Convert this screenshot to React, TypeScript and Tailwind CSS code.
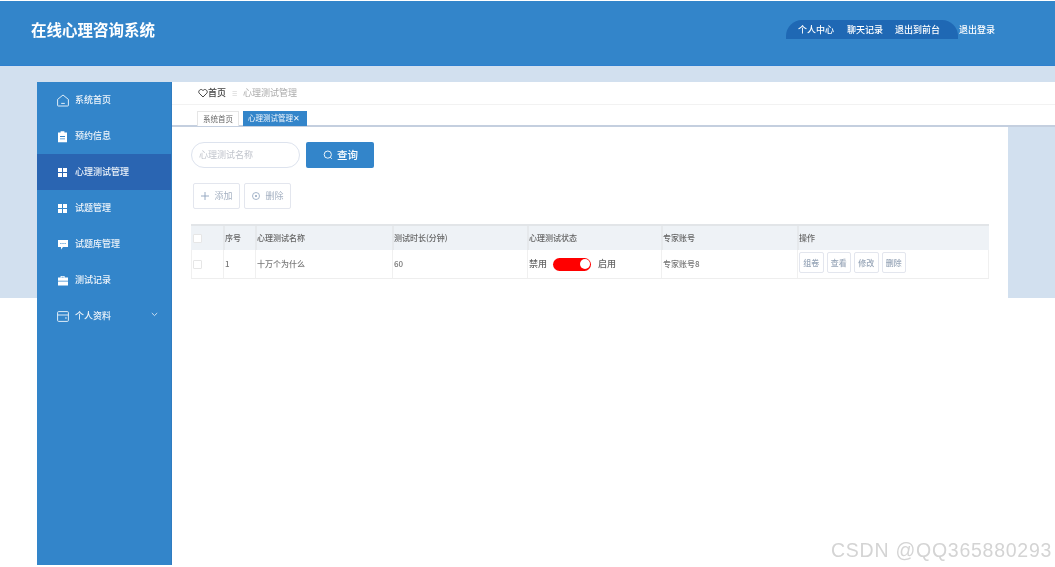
import React from "react";

const font = { fontFamily: '"Noto Sans CJK SC", "Noto Sans", sans-serif' };

const HomeIcon = () => (
  <svg width="13" height="13" viewBox="0 0 13 13" fill="none" stroke="#f2f7fc" strokeWidth="0.9">
    <path d="M.6 5.4 6 1 11.4 5.4V11.4Q11.4 12 10.8 12H1.2Q.6 12 .6 11.4z" strokeLinejoin="round" />
    <path d="M4.2 9.4h3.6" />
  </svg>
);
const ClipIcon = () => (
  <svg width="13" height="13" viewBox="0 0 13 13" fill="white">
    <path d="M1 2.4H3.6V1.2H7.4V2.4H10V12.2H1zM3 6V7H8V6zM3 8.4V9.2H8V8.4z" fillRule="evenodd" />
  </svg>
);
const GridIcon = () => (
  <svg width="13" height="13" viewBox="0 0 13 13" fill="white">
    <rect x="1" y="2" width="4" height="4" />
    <rect x="6" y="2" width="4" height="4" />
    <rect x="1" y="7" width="4" height="4" />
    <rect x="6" y="7" width="4" height="4" />
  </svg>
);
const ChatIcon = () => (
  <svg width="13" height="13" viewBox="0 0 13 13" fill="white">
    <path d="M1 2H11V9H6L4 11.4V9H1zM3.4 5V6H4.4V5zM5.5 5V6H6.5V5zM7.6 5V6H8.6V5z" fillRule="evenodd" />
  </svg>
);
const CaseIcon = () => (
  <svg width="13" height="13" viewBox="0 0 13 13" fill="white">
    <path d="M3.6 3.6V2H7.6V3.6H11V6.8H1V3.6zM4.5 3.6H6.7V2.8H4.5zM1 7.5H11V11.6H1z" fillRule="evenodd" />
  </svg>
);
const CardIcon = () => (
  <svg width="13" height="13" viewBox="0 0 13 13" fill="none" stroke="#f2f7fc" strokeWidth="0.9">
    <rect x=".6" y="1.6" width="10.8" height="9.8" rx="1" />
    <path d="M.6 5H11.4M8 8H9.8" />
  </svg>
);

const menu: { label: string; icon: React.ReactNode; active?: boolean; caret?: boolean }[] = [
  { label: "系统首页", icon: <HomeIcon /> },
  { label: "预约信息", icon: <ClipIcon /> },
  { label: "心理测试管理", icon: <GridIcon />, active: true },
  { label: "试题管理", icon: <GridIcon /> },
  { label: "试题库管理", icon: <ChatIcon /> },
  { label: "测试记录", icon: <CaseIcon /> },
  { label: "个人资料", icon: <CardIcon />, caret: true },
];

const Sidebar = () => (
  <aside className="w-[135px] shrink-0 h-[483px] bg-[#3385ca] border-r border-[#2f7cc0]">
    {menu.map((m) => (
      <div
        key={m.label}
        className={`h-9 flex items-center pl-5 text-[9px] font-medium text-[#eef4fa] ${m.active ? "bg-[#2a65b2]" : ""}`}
      >
        <span className="w-[18px] shrink-0 flex">{m.icon}</span>
        <span>{m.label}</span>
        {m.caret && (
          <svg className="ml-[40px] -mt-[3px]" width="7" height="5" viewBox="0 0 7 5" fill="none" stroke="#dbe8f5" strokeWidth="0.9">
            <path d="M.8 1 3.5 3.6 6.2 1" />
          </svg>
        )}
      </div>
    ))}
  </aside>
);

const Toolbar = () => (
  <>
    <div className="flex gap-[6px]">
      <div className="w-[109px] h-[26px] rounded-full border border-[#dde3ee] flex items-center pl-[7px] text-[9px] text-[#c0c4cc]">
        心理测试名称
      </div>
      <button className="w-[68px] h-[26px] rounded-[2px] bg-[#3385ca] text-white text-[10.5px] font-medium flex items-center justify-center gap-[4px] pl-[1px]">
        <svg width="10" height="10" viewBox="0 0 10 10" fill="none" stroke="white" strokeWidth="0.9">
          <circle cx="4.8" cy="4.6" r="3.6" />
          <path d="M7.4 7.3 8.8 8.8" />
        </svg>
        查询
      </button>
    </div>
    <div className="flex gap-1 mt-[15px] ml-[2px]">
      <button className="w-[47px] h-[26px] rounded-[2px] border border-[#e3e6ee] text-[9px] text-[#a5b1c2] flex items-center justify-center gap-[5px] pl-[1px]">
        <svg width="8" height="8" viewBox="0 0 8 8" stroke="#8fa3bd" strokeWidth="0.9">
          <path d="M4 0V8M0 4H8" />
        </svg>
        添加
      </button>
      <button className="w-[47px] h-[26px] rounded-[2px] border border-[#e3e6ee] text-[9px] text-[#a5b1c2] flex items-center justify-center gap-[5px] pl-[1px]">
        <svg width="8" height="8" viewBox="0 0 8 8" fill="none" stroke="#8fa3bd" strokeWidth="0.8">
          <circle cx="4" cy="4" r="3.5" />
          <circle cx="4" cy="4" r="1" fill="#8fa3bd" stroke="none" />
        </svg>
        删除
      </button>
    </div>
  </>
);

const cols = "grid grid-cols-[32px_32px_137px_135px_134px_136px_192px]";
const Box = () => <span className="block w-[9px] h-[9px] bg-white border border-[#e6e6e6] rounded-[1px]" />;

const headers = ["序号", "心理测试名称", "测试时长(分钟)", "心理测试状态", "专家账号", "操作"];
const cell = "flex items-center pl-[1px] border-l border-[#f0f0f0]";

const Table = () => (
  <div className="w-[798px] mt-[15px] text-[8px]">
    <div className={`${cols} h-[26px] bg-[#eef2f6] border-t-2 border-[#e2e5e8] font-medium text-[#666]`}>
      <div className="flex items-center pl-[2px]">
        <Box />
      </div>
      {headers.map((h) => (
        <div key={h} className="flex items-center border-l-2 border-[#e6e9ec]">
          {h}
        </div>
      ))}
    </div>
    <div className={`${cols} h-[29px] border-b border-[#eeeeee] text-[#777] font-medium`}>
      <div className={cell}>
        <Box />
      </div>
      <div className={cell}>1</div>
      <div className={cell}>十万个为什么</div>
      <div className={cell}>60</div>
      <div className={`${cell} text-[9px] text-[#666]`}>
        <span>禁用</span>
        <span className="ml-[6px] mr-[7px] w-[38px] h-[13px] rounded-full bg-[#ff0000] flex items-center justify-end pr-[1px]">
          <span className="w-[10px] h-[10px] rounded-full bg-white" />
        </span>
        <span>启用</span>
      </div>
      <div className={cell}>专家账号8</div>
      <div className="flex items-start pt-[2px] pl-[1px] gap-[3px] border-l border-r border-[#f0f0f0]">
        {["组卷", "查看", "修改", "删除"].map((b) => (
          <button
            key={b}
            className="w-[24.5px] h-[21px] rounded-[2px] border border-[#e3e6ee] text-[8px] text-[#98a6b8] flex items-center justify-center"
          >
            {b}
          </button>
        ))}
      </div>
    </div>
  </div>
);

export default function App() {
  return (
    <div className="relative w-[1055px] h-[567px] overflow-hidden bg-white blur-[0.45px]" style={font}>
      <header className="h-[65px] mt-[1px] bg-[#3385ca] border-b border-[#2f80cf] flex items-start justify-between pl-[31px] pr-[60px]">
        <h1 className="mt-[17px] text-[15.5px] leading-[22px] font-bold text-white">在线心理咨询系统</h1>
        <nav className="mt-[19px] flex items-center text-[9px] font-medium text-white">
          <div className="h-[19px] w-[172px] bg-[#1f68b4] rounded-t-[16px] flex items-center pl-3 gap-[13px]">
            <span>个人中心</span>
            <span>聊天记录</span>
            <span className="ml-[-1px]">退出到前台</span>
          </div>
          <span className="ml-[1px]">退出登录</span>
        </nav>
      </header>
      <div className="flex pt-[16px] pl-[37px] h-[501px] bg-[linear-gradient(#d2e0ef_232px,#ffffff_232px)]">
        <Sidebar />
        <div className="flex-1 min-w-0">
          <div className="bg-white h-[45px] border-b-2 border-[#c4cfdf]">
            <div className="h-[23px] border-b border-[#f2f2f2] flex items-center pl-[26px] text-[9px]">
              <svg width="10" height="10" viewBox="0 0 12 12" fill="none" stroke="#333" strokeWidth="1.1">
                <path d="M6 10.8 1.4 6.2C-.6 3.6 3.6-.2 6 3c2.4-3.2 6.6.6 4.6 3.2z" />
              </svg>
              <span className="text-[#444] font-medium">首页</span>
              <span className="mx-[6px] text-[#ccc] text-[6px]">☰</span>
              <span className="text-[#aaaaaa]">心理测试管理</span>
            </div>
            <div className="flex items-end h-[21px] pl-[25px] gap-1 text-[7.5px]">
              <span className="h-[15px] w-[42px] pb-[1px] bg-white border border-[#e6e6e6] border-b-0 text-[#666] flex items-center justify-center">
                系统首页
              </span>
              <span className="h-[15px] w-[64px] pb-[1px] bg-[#3385ca] text-[#f2f7fc] flex items-center pl-[5px]">
                心理测试管理<span className="text-[8px] leading-none">✕</span>
              </span>
            </div>
          </div>
          <main className="w-[836px] h-[171px] bg-white pt-[15px] pl-[19px]">
            <Toolbar />
            <Table />
          </main>
        </div>
      </div>
      <div className="absolute left-[831px] top-[538px] text-[19.5px] leading-6 tracking-[0.75px] text-[#d4d4d4] font-['Liberation_Sans']">
        CSDN @QQ365880293
      </div>
    </div>
  );
}
